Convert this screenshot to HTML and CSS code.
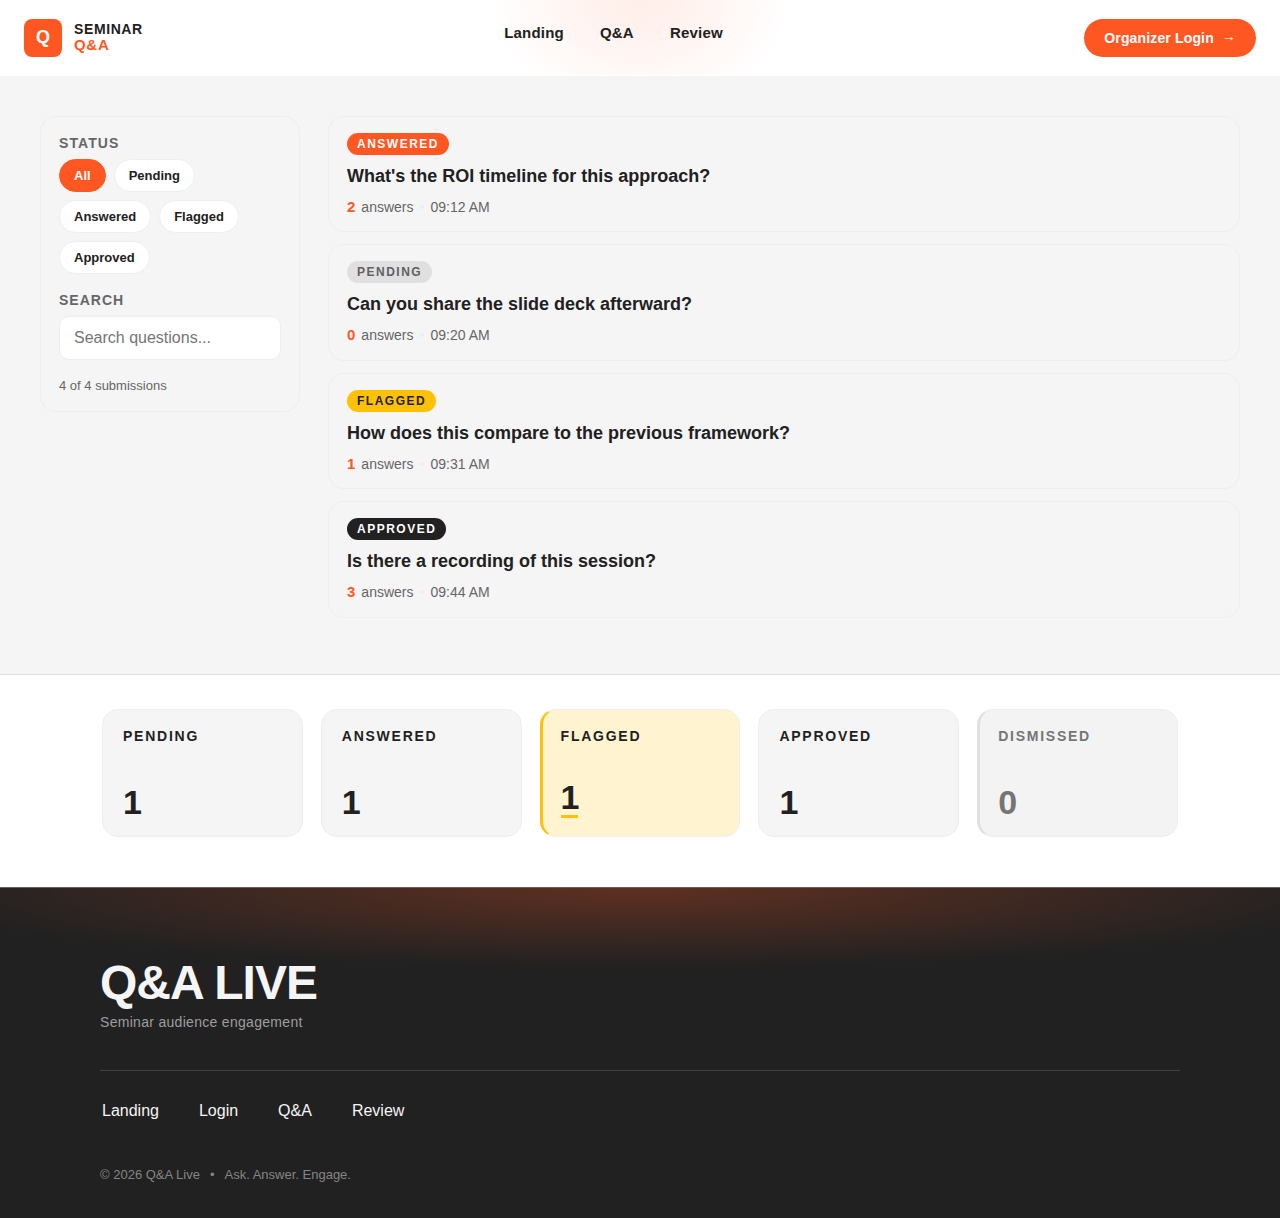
FILE: index.html
```html
<!DOCTYPE html>
<html lang="en">
<head>
    <meta charset="UTF-8">
    <meta name="viewport" content="width=device-width, initial-scale=1.0">
    <title>Seminar Q&amp;A</title>
    <link rel="stylesheet" href="styles.css">
</head>
<body>
    <header class="topbar">
        <a class="brand" href="#">
            <span class="brand-mark">Q</span>
            <span class="brand-text">
                <span class="brand-top">SEMINAR</span>
                <span class="brand-bottom">Q&amp;A</span>
            </span>
        </a>
        <nav class="topnav">
            <a href="#">Landing</a>
            <a href="#">Q&amp;A</a>
            <a href="#">Review</a>
        </nav>
        <a class="login-btn" href="#">Organizer Login <span class="arrow">→</span></a>
    </header>

    <main class="board">
        <aside class="filters">
            <h4 class="filter-label">STATUS</h4>
            <div class="chips">
                <button class="chip active">All</button>
                <button class="chip">Pending</button>
                <button class="chip">Answered</button>
                <button class="chip">Flagged</button>
                <button class="chip">Approved</button>
            </div>
            <h4 class="filter-label search-label">SEARCH</h4>
            <input class="search" type="text" placeholder="Search questions...">
            <p class="count">4 of 4 submissions</p>
        </aside>

        <section class="questions">
            <article class="question">
                <span class="badge answered">ANSWERED</span>
                <h3>What's the ROI timeline for this approach?</h3>
                <p class="meta"><strong>2</strong><span>answers</span><i class="dot"></i><span>09:12 AM</span></p>
            </article>
            <article class="question">
                <span class="badge pending">PENDING</span>
                <h3>Can you share the slide deck afterward?</h3>
                <p class="meta"><strong>0</strong><span>answers</span><i class="dot"></i><span>09:20 AM</span></p>
            </article>
            <article class="question">
                <span class="badge flagged">FLAGGED</span>
                <h3>How does this compare to the previous framework?</h3>
                <p class="meta"><strong>1</strong><span>answers</span><i class="dot"></i><span>09:31 AM</span></p>
            </article>
            <article class="question">
                <span class="badge approved">APPROVED</span>
                <h3>Is there a recording of this session?</h3>
                <p class="meta"><strong>3</strong><span>answers</span><i class="dot"></i><span>09:44 AM</span></p>
            </article>
        </section>
    </main>

    <section class="stats">
        <div class="stat">
            <h4>PENDING</h4>
            <p class="stat-num">1</p>
        </div>
        <div class="stat">
            <h4>ANSWERED</h4>
            <p class="stat-num">1</p>
        </div>
        <div class="stat stat-flagged">
            <h4>FLAGGED</h4>
            <p class="stat-num">1</p>
        </div>
        <div class="stat">
            <h4>APPROVED</h4>
            <p class="stat-num">1</p>
        </div>
        <div class="stat stat-dismissed">
            <h4>DISMISSED</h4>
            <p class="stat-num">0</p>
        </div>
    </section>

    <footer class="footer">
        <div class="footer-inner">
            <h2 class="footer-title">Q&amp;A LIVE</h2>
            <p class="footer-sub">Seminar audience engagement</p>
            <ul class="footer-links">
                <li><a href="#">Landing</a></li>
                <li><a href="#">Login</a></li>
                <li><a href="#">Q&amp;A</a></li>
                <li><a href="#">Review</a></li>
            </ul>
            <p class="copyright">© 2026 Q&amp;A Live<span class="sep">•</span>Ask. Answer. Engage.</p>
        </div>
    </footer>
</body>
</html>
```

FILE: styles.css
```css
* {
    margin: 0;
    padding: 0;
    box-sizing: border-box;
}
body {
    font-family: "Liberation Sans", Arial, sans-serif;
    background: #fff;
    color: #212121;
}
a {
    text-decoration: none;
    color: inherit;
}

/* top bar */
.topbar {
    display: flex;
    justify-content: space-between;
    align-items: center;
    height: 76px;
    padding: 0 24px;
    border-bottom: 1px solid #fff;
    background: radial-gradient(ellipse 150px 110px at 640px 0, rgba(255,87,34,0.1), rgba(255,87,34,0.05) 55%, rgba(255,87,34,0) 100%) no-repeat padding-box, #fff;
}
.brand {
    display: flex;
    align-items: center;
    gap: 12px;
}
.brand-mark {
    display: flex;
    align-items: center;
    justify-content: center;
    width: 38px;
    height: 38px;
    border-radius: 8px;
    background: #ff5722;
    color: #fff;
    font-size: 18px;
    font-weight: 700;
}
.brand-text {
    display: flex;
    flex-direction: column;
    padding-bottom: 1px;
    font-size: 14px;
    font-weight: 700;
    line-height: 16px;
    letter-spacing: 0.6px;
}
.brand-bottom {
    color: #ff5722;
    font-size: 15px;
    letter-spacing: 0.7px;
}
.topnav {
    display: flex;
    gap: 36px;
    padding-bottom: 11px;
    font-size: 15px;
    font-weight: 700;
    letter-spacing: 0.2px;
}
.login-btn {
    display: flex;
    align-items: center;
    gap: 8px;
    height: 38px;
    padding: 0 20px;
    border-radius: 19px;
    background: #ff5722;
    color: #fff;
    font-size: 14px;
    font-weight: 700;
    letter-spacing: 0.15px;
}
.arrow {
    padding-bottom: 4px;
}

/* board */
.board {
    display: flex;
    align-items: flex-start;
    gap: 28px;
    padding: 40px 40px 56px;
    background: #f5f5f5;
    border-bottom: 1px solid #e0e0e0;
}
.filters {
    flex: 0 0 260px;
    padding: 18px 18px 17px;
    border: 1px solid #eeeeee;
    border-radius: 16px;
}
.filter-label {
    font-size: 14px;
    font-weight: 700;
    line-height: 17px;
    letter-spacing: 1.1px;
    color: #666;
}
.search-label {
    margin-top: 18px;
    letter-spacing: 1px;
}
.chips {
    display: flex;
    flex-wrap: wrap;
    gap: 8px;
    margin-top: 7px;
}
.chip {
    height: 33px;
    padding: 0 14px;
    border: 1px solid #eeeeee;
    border-radius: 17px;
    background: #fff;
    color: #212121;
    font-family: inherit;
    font-size: 13px;
    font-weight: 700;
}
.chip.active {
    background: #ff5722;
    border-color: #ff5722;
    color: #fff;
}
.search {
    display: block;
    width: 100%;
    height: 44px;
    margin-top: 7px;
    padding: 0 14px;
    border: 1px solid #eeeeee;
    border-radius: 10px;
    background: #fff;
    font-family: inherit;
    font-size: 16px;
}
.search::placeholder {
    color: #757575;
}
.count {
    margin-top: 17px;
    font-size: 13px;
    line-height: 17px;
    color: #666;
}
.questions {
    flex: 1;
    display: flex;
    flex-direction: column;
    gap: 12px;
}
.question {
    height: 116.4px;
    padding: 16px 18px;
    border: 1px solid #eeeeee;
    border-radius: 16px;
}
.badge {
    display: inline-block;
    height: 22px;
    padding: 0 10px;
    border-radius: 11px;
    font-size: 12px;
    font-weight: 700;
    line-height: 22px;
    letter-spacing: 1.5px;
    vertical-align: top;
}
.answered {
    background: #ff5722;
    color: #fff;
}
.pending {
    background: #e0e0e0;
    color: #616161;
}
.flagged {
    background: #ffc107;
    color: #212121;
}
.approved {
    background: #212121;
    color: #fff;
}
.question h3 {
    margin-top: 10px;
    font-size: 18px;
    line-height: 23px;
    font-weight: 700;
}
.meta {
    display: flex;
    align-items: center;
    margin-top: 10px;
    font-size: 14px;
    line-height: 18px;
    color: #666;
}
.meta strong {
    margin-right: 6px;
    font-size: 15px;
    color: #ff5722;
}
.dot {
    width: 4px;
    height: 4px;
    margin: 0 6px 0 7px;
    border-radius: 50%;
    background: #eeeeee;
}

/* stats */
.stats {
    display: grid;
    grid-template-columns: repeat(5, 1fr);
    gap: 18px;
    padding: 34px 102px 50px;
    background: #fff;
}
.stat {
    display: flex;
    flex-direction: column;
    justify-content: space-between;
    height: 128px;
    padding: 18px 20px 14px;
    border: 1px solid #eeeeee;
    border-radius: 16px;
    background: #f5f5f5;
}
.stat h4 {
    font-size: 14px;
    font-weight: 700;
    line-height: 17px;
    letter-spacing: 1.75px;
}
.stat-num {
    font-size: 34px;
    font-weight: 700;
    line-height: 39px;
    letter-spacing: -0.04em;
}
.stat-flagged {
    background: #fff3d0;
    border-left: 3px solid #ffc107;
    padding-left: 18px;
}
.stat-flagged .stat-num {
    align-self: flex-start;
    margin-bottom: 4px;
    padding-bottom: 3px;
    border-bottom: 3px solid #ffc107;
    line-height: 30px;
}
.stat-dismissed {
    border-left: 3px solid #e0e0e0;
    padding-left: 18px;
    background: #f3f3f3;
}
.stat-dismissed h4,
.stat-dismissed .stat-num {
    color: #757575;
}

/* footer */
.footer {
    height: 331px;
    padding-top: 70px;
    border-top: 1px solid #616161;
    background: radial-gradient(ellipse 740px 80px at 640px 0, rgba(255,87,34,0.28), rgba(255,87,34,0) 100%), #212121;
    background-repeat: no-repeat;
    color: #f5f5f5;
}
.footer-inner {
    margin: 0 100px;
}
.footer-title {
    font-size: 48px;
    font-weight: 700;
    line-height: 50px;
    letter-spacing: -1px;
}
.footer-sub {
    margin-top: 3px;
    padding-bottom: 36px;
    border-bottom: 1px solid #424242;
    font-size: 14px;
    line-height: 23px;
    letter-spacing: 0.3px;
    color: #9e9e9e;
}
.footer-links {
    display: flex;
    gap: 36px;
    margin-top: 30px;
    list-style: none;
}
.footer-links a {
    display: block;
    padding: 0 2px;
    font-size: 16px;
    line-height: 20px;
}
.copyright {
    margin-top: 44px;
    font-size: 13px;
    line-height: 20px;
    color: #858585;
}
.sep {
    margin: 0 10px;
}
```
